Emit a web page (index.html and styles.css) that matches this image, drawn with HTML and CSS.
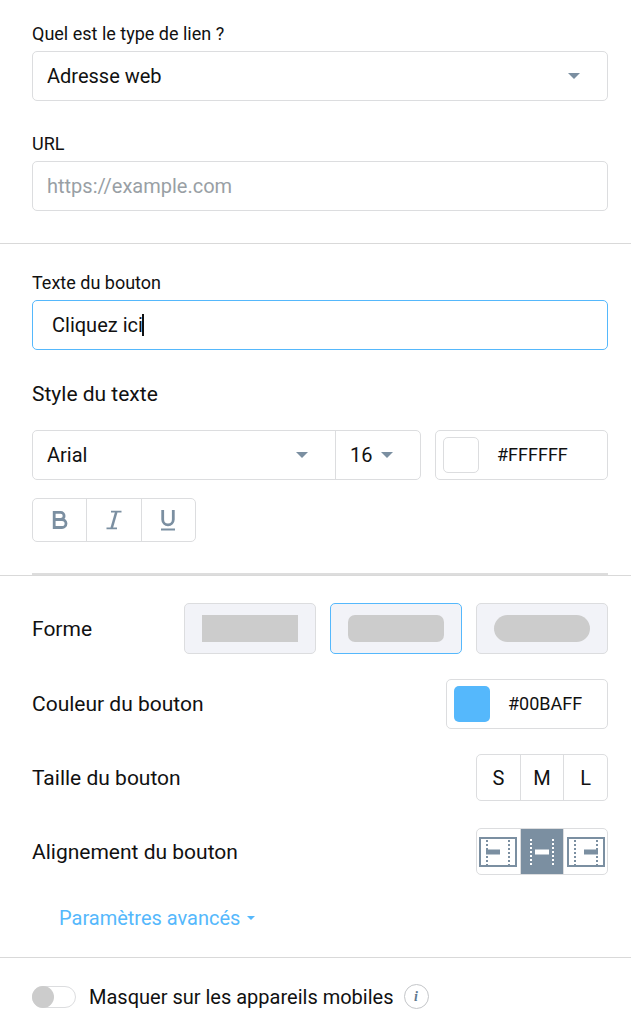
FILE: index.html
```
<!DOCTYPE html>
<html lang="fr">
<head>
  <meta charset="UTF-8" />
  <meta name="viewport" content="width=device-width, initial-scale=1" />
  <title>Bouton</title>
  <link rel="stylesheet" href="styles.css">
</head>
<body>

  <!-- Lien -->
  <section class="panel">
    <div class="field">
      <label for="linkType">Quel est le type de lien ?</label>
      <div class="select box">
        <select id="linkType">
          <option>Adresse web</option>
        </select>
      </div>
    </div>
    <div class="field">
      <label for="url">URL</label>
      <input class="box" type="text" id="url" placeholder="https://example.com" />
    </div>
  </section>

  <!-- Texte -->
  <section class="panel panel-text">
    <div class="field">
      <label for="buttonText">Texte du bouton</label>
      <div class="active-field">
        <input class="box active" type="text" id="buttonText" value="Cliquez ici" />
        <span class="caret"></span>
      </div>
    </div>

    <h2>Style du texte</h2>
    <div class="text-style">
      <div class="font-group box">
        <div class="select font">
          <select aria-label="Police">
            <option>Arial</option>
          </select>
        </div>
        <div class="select size">
          <select aria-label="Taille du texte">
            <option>16</option>
          </select>
        </div>
      </div>
      <div class="color box color-text">
        <button class="swatch white" type="button" aria-label="Choisir la couleur du texte"></button>
        <input type="text" value="#FFFFFF" aria-label="Couleur du texte" />
      </div>
    </div>

    <div class="group format">
      <button type="button" aria-label="Gras">
        <svg width="16" height="20" viewBox="0 0 16 20" fill="none" stroke="currentColor" stroke-width="2.8">
          <path d="M2.2 2.4H8.6a3.4 3.4 0 0 1 0 7H2.2zM2.2 9.5H10a3.9 3.9 0 0 1 0 8H2.2z" />
        </svg>
      </button>
      <button type="button" aria-label="Italique">
        <svg width="16" height="20" viewBox="0 0 16 20" fill="none" stroke="currentColor">
          <path d="M5 1.7h10.5M.5 18.3H11" stroke-width="1.8" />
          <path d="M10.3 2L5.7 18" stroke-width="2.6" />
        </svg>
      </button>
      <button type="button" aria-label="Souligné">
        <svg width="16" height="22" viewBox="0 0 16 22" fill="none" stroke="currentColor">
          <path d="M2.7 1v9.5a5.3 5.3 0 0 0 10.6 0V1" stroke-width="2.8" />
          <path d="M1 20.5h14" stroke-width="1.8" />
        </svg>
      </button>
    </div>
    <hr />
  </section>

  <!-- Apparence -->
  <section class="panel panel-look">
    <div class="row">
      <span class="name">Forme</span>
      <div class="shapes">
        <button type="button" aria-label="Rectangle"><span class="shape"></span></button>
        <button type="button" class="active" aria-label="Arrondi"><span class="shape rounded"></span></button>
        <button type="button" aria-label="Pilule"><span class="shape pill"></span></button>
      </div>
    </div>

    <div class="row">
      <label class="name" for="buttonColor">Couleur du bouton</label>
      <div class="color box color-button">
        <button class="swatch blue" type="button" aria-label="Choisir la couleur du bouton"></button>
        <input type="text" id="buttonColor" value="#00BAFF" />
      </div>
    </div>

    <div class="row">
      <span class="name">Taille du bouton</span>
      <div class="group thirds">
        <button type="button">S</button>
        <button type="button">M</button>
        <button type="button">L</button>
      </div>
    </div>

    <div class="row row-align">
      <span class="name">Alignement du bouton</span>
      <div class="group thirds">
        <button type="button" aria-label="Gauche">
          <svg width="38" height="30" viewBox="0 0 38 30" fill="none" stroke="currentColor" stroke-width="2">
            <rect x="1" y="1" width="36" height="28" />
            <path d="M8 3v25M30 3v25" stroke-dasharray="2 2" />
            <path d="M7 15h14" stroke-width="5" />
          </svg>
        </button>
        <button type="button" class="on" aria-label="Centre">
          <svg width="38" height="30" viewBox="0 0 38 30" fill="none" stroke="currentColor" stroke-width="2">
            <path d="M8 2v27M30 2v27" stroke-dasharray="2 2" />
            <path d="M12 15h14" stroke-width="5" />
          </svg>
        </button>
        <button type="button" aria-label="Droite">
          <svg width="38" height="30" viewBox="0 0 38 30" fill="none" stroke="currentColor" stroke-width="2">
            <rect x="1" y="1" width="36" height="28" />
            <path d="M8 3v25M30 3v25" stroke-dasharray="2 2" />
            <path d="M17 15h14" stroke-width="5" />
          </svg>
        </button>
      </div>
    </div>

    <a class="advanced" href="#">Paramètres avancés</a>
  </section>

  <!-- Mobile -->
  <section class="mobile">
    <input class="toggle" type="checkbox" id="hideMobile" />
    <label for="hideMobile">Masquer sur les appareils mobiles</label>
    <button class="info" type="button" aria-label="Informations">i</button>
  </section>

</body>
</html>
```
FILE: styles.css
```
* {
  box-sizing: border-box;
}

body {
  margin: 0;
  font-family: Roboto, sans-serif;
  font-size: 20px;
  line-height: 24px;
  background: #fff;
  color: #111;
}

button,
input,
select {
  font: inherit;
  color: inherit;
  margin: 0;
  padding: 0;
  border: none;
  background: none;
  outline: none;
}

.panel {
  padding: 22px 23px 32px 32px;
  border-bottom: 1px solid #d9d9d9;
}

.panel-text {
  padding-top: 27px;
  padding-bottom: 0;
}

.field + .field {
  margin-top: 31px;
}

.field label {
  display: block;
  margin-bottom: 5px;
  font-size: 18px;
}

.box {
  display: flex;
  width: 100%;
  height: 50px;
  border: 1px solid #dcdddf;
  border-radius: 5px;
}

input.box {
  padding: 0 14px;
}

input.box::placeholder {
  color: #999fa5;
  opacity: 1;
}

/* selects */
.select {
  position: relative;
}

.select select {
  appearance: none;
  width: 100%;
  height: 100%;
  padding: 0 14px;
}

.select::after {
  content: "";
  position: absolute;
  top: 21px;
  right: 27px;
  border: 6px solid transparent;
  border-top-color: #7b8fa1;
  border-bottom: none;
  pointer-events: none;
}

/* focused text box */
.active-field {
  position: relative;
}

input.box.active {
  padding: 0 19px;
  border-color: #55b8fc;
}

.caret {
  position: absolute;
  top: 14px;
  left: 110px;
  width: 2px;
  height: 22px;
  background: #111;
}

h2 {
  margin: 30px 0 22px;
  font-size: 21px;
  font-weight: 400;
  line-height: 28px;
}

.text-style {
  display: flex;
  gap: 14px;
}

.font-group {
  flex: 1;
  min-width: 0;
}

.font {
  flex: 1;
}

.size {
  width: 85px;
  border-left: 1px solid #dcdddf;
}

.color {
  align-items: center;
  gap: 18px;
  padding: 0 7px;
  font-size: 18px;
}

.color input {
  flex: 1;
  min-width: 0;
}

.color-text {
  width: 173px;
}

.color-button {
  width: 162px;
}

.swatch {
  width: 36px;
  height: 36px;
  border-radius: 5px;
}

.white {
  border: 1px solid #dcdddf;
}

.blue {
  background: #55b8fc;
}

/* button groups */
.group {
  display: flex;
  border: 1px solid #dcdddf;
  border-radius: 5px;
  overflow: hidden;
}

.group button {
  display: flex;
  flex: 1;
  align-items: center;
  justify-content: center;
}

.group button + button {
  border-left: 1px solid #dcdddf;
}

.format {
  width: 164px;
  height: 44px;
  margin-top: 18px;
  color: #7b8fa1;
}

hr {
  height: 2px;
  margin: 31px 0 0;
  border: none;
  background: #ddd;
}

.panel-look {
  display: flex;
  flex-direction: column;
  gap: 25px;
  padding-top: 27px;
  padding-bottom: 27px;
}

.row {
  display: flex;
  align-items: center;
  justify-content: space-between;
}

.name {
  font-size: 21px;
}

.shapes {
  display: flex;
  gap: 14px;
}

.shapes button {
  display: flex;
  justify-content: center;
  width: 132px;
  height: 51px;
  padding-top: 11px;
  border: 1px solid #dcdddf;
  border-radius: 5px;
  background: #f2f3f8;
}

.shapes .active {
  border-color: #55b8fc;
}

.shape {
  width: 96px;
  height: 27px;
  background: #ccc;
}

.rounded {
  border-radius: 7px;
}

.pill {
  border-radius: 14px;
}

.thirds {
  width: 132px;
  height: 47px;
}

.row-align {
  margin-top: 2px;
}

.row-align button {
  color: #7b8fa1;
}

.row-align svg {
  flex: none;
}

.row-align .on {
  background: #7b8fa1;
  color: #fff;
}

.advanced {
  display: flex;
  align-items: center;
  align-self: flex-start;
  gap: 7px;
  margin: 6px 0 0 27px;
  color: #55b8fc;
  text-decoration: none;
}

.advanced::after {
  content: "";
  border: 4px solid transparent;
  border-top-color: #55b8fc;
  border-bottom: none;
}

.mobile {
  display: flex;
  align-items: center;
  padding: 26px 23px 14px 32px;
}

.toggle {
  appearance: none;
  width: 44px;
  height: 22px;
  margin-right: 13px;
  border: 1px solid #dcdddf;
  border-radius: 11px;
}

.toggle::before {
  content: "";
  display: block;
  width: 22px;
  height: 22px;
  margin: -1px;
  border-radius: 50%;
  background: #ccc;
}

.info {
  width: 25px;
  height: 25px;
  margin-left: 10px;
  border: 1px solid #c4c6c9;
  border-radius: 50%;
  color: #5f7990;
  font-family: "Liberation Serif", serif;
  font-size: 14px;
  font-style: italic;
  font-weight: bold;
  line-height: 20px;
}
```
